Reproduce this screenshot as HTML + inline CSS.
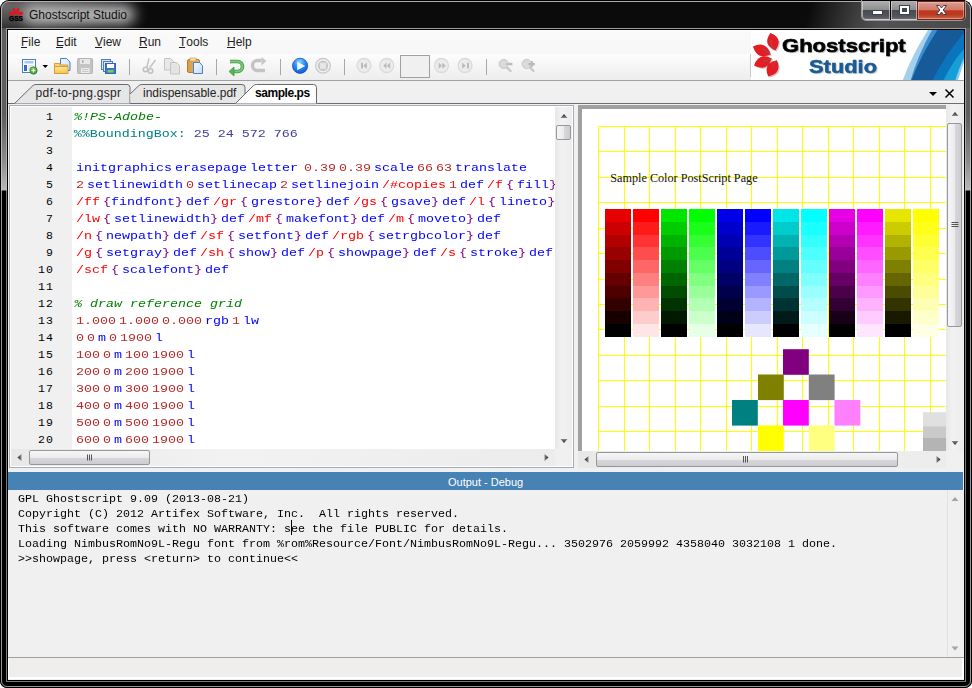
<!DOCTYPE html>
<html><head><meta charset="utf-8">
<style>
*{margin:0;padding:0;box-sizing:border-box}
html,body{width:972px;height:688px;overflow:hidden;background:#fff;font-family:"Liberation Sans",sans-serif}
.a{position:absolute}
svg{position:absolute;overflow:visible}
#win{left:0;top:0;width:972px;height:688px;border-radius:9px 9px 7px 7px;overflow:hidden;
 background:linear-gradient(to bottom,#5e5e5e 0,#5e5e5e 115px,#8a8a8a 160px,#b8b8b8 190px,#000 191px,#000 100%)}
.menu{top:35px;font-size:12px;line-height:14px;color:#1e1e1e}
.menu u{text-decoration:none;position:relative}.menu u:after{content:"";position:absolute;left:0;right:1px;top:12px;height:1px;background:#1e1e1e}
.sep{top:59px;width:1px;height:16px;background:#a8a8a8;border-right:1px solid #fff;width:2px}
.tabt{font-size:12px;line-height:14px;color:#1e1e1e;top:86px}
#code{left:72px;top:107px;width:483px;height:341px;overflow:hidden;font-family:"Liberation Mono",monospace;font-size:11.5px;line-height:17px;background:#fff}
#codei{position:absolute;left:0;top:1px;width:400px;transform:scaleX(1.15942);transform-origin:0 0}
.ln{height:17px;white-space:pre;padding-left:3.45px}
.ln i{display:inline-block;width:2.5875px}
.c{color:#008000;font-style:italic}
.d{color:#008080}
.v{color:#40409a}
.k{color:#0000ff}
.n{color:#b52a2a}
.l{color:#ff0000}
.b{color:#800080}
#gut{left:11px;top:107px;width:61px;height:342px;background:#f0f0f0;font-family:"Liberation Mono",monospace;font-size:11.5px;letter-spacing:1.1px;line-height:17px;color:#000;text-align:right;padding-top:1px}
#gut div{height:17px;padding-right:18px}
#out{left:18px;top:491.5px;font-family:"Liberation Mono",monospace;font-size:10.8px;transform:scaleX(1.08025);transform-origin:0 0;line-height:15px;color:#000;white-space:pre}

.vs{background:linear-gradient(to right,#e8e8e8,#f2f2f2 40%,#ececec)}
.thumbv{border:1px solid #979797;border-radius:2px;background:linear-gradient(to right,#f6f6f6 0,#ececec 50%,#d8d8dc 51%,#ccccd2 100%)}
.thumbh{border:1px solid #979797;border-radius:2px;background:linear-gradient(to bottom,#f6f6f6 0,#ececec 50%,#d8d8dc 51%,#ccccd2 100%)}
</style></head><body>
<div id="win" class="a">
 <!-- title bar dark region -->
 <div class="a" style="left:2px;top:2px;width:968px;height:26px;background:#0b0b0b"></div>
 <div class="a" style="left:0;top:0;width:260px;height:30px;background:radial-gradient(ellipse 130px 34px at 0px 6px,#6a6a6a 0,#4a4a4a 40%,rgba(10,10,10,0) 100%)"></div>
 <div class="a" style="left:740px;top:2px;width:230px;height:26px;background:linear-gradient(105deg,rgba(11,11,11,0) 0,rgba(11,11,11,0) 30%,rgba(75,75,75,.85) 52%,rgba(90,90,90,.9) 62%,rgba(80,80,80,.9) 100%)"></div>
 <div class="a" style="left:23px;top:5px;width:112px;height:19px;border-radius:9px;background:#bdbdbd;filter:blur(6.5px)"></div>
 <!-- outer lines -->
 <div class="a" style="left:0;top:0;width:972px;height:688px;border:1px solid #000;border-radius:9px 9px 7px 7px"></div>
 <div class="a" style="left:1px;top:1px;width:970px;height:686px;border:1px solid rgba(200,200,200,.75);border-radius:8px 8px 6px 6px"></div>
 <div class="a" style="left:6px;top:28px;width:960px;height:654px;border:1px solid rgba(200,200,200,.6)"></div>
 <div class="a" style="left:7px;top:29px;width:958px;height:652px;border:1px solid #000"></div>
</div>
<!-- title icon -->
<svg style="left:0;top:0" width="30" height="30" viewBox="0 0 30 30">
 <g fill="#e8141c">
  <ellipse cx="11.8" cy="13.6" rx="3" ry="1.7" transform="rotate(15 11.8 13.6)"/>
  <ellipse cx="20.2" cy="13.6" rx="3" ry="1.7" transform="rotate(-15 20.2 13.6)"/>
  <ellipse cx="14.3" cy="10.6" rx="1.5" ry="2.7" transform="rotate(-20 14.3 10.6)"/>
  <ellipse cx="17.7" cy="10.6" rx="1.5" ry="2.7" transform="rotate(20 17.7 10.6)"/>
  <path d="M14 11 L16 13.5 L18 11 L17 14 L15 14Z"/>
 </g>
 <text x="16" y="21" font-family="Liberation Sans" font-weight="bold" font-size="6.6" text-anchor="middle" fill="#000" stroke="#000" stroke-width=".35">GSS</text>
</svg>
<div class="a" style="left:29px;top:7.7px;font-size:12px;line-height:14px;color:#101010;white-space:nowrap">Ghostscript Studio</div>
<!-- caption buttons -->
<div class="a" style="left:861px;top:0;width:105px;height:21px;border:1px solid rgba(220,220,220,.7);border-top:none;border-radius:0 0 5px 5px;background:#000"></div>
<div class="a" style="left:862px;top:1px;width:28px;height:19px;border:1px solid rgba(230,230,230,.6);border-radius:0 0 0 4px;background:linear-gradient(#aaaaaa 0,#8e8e8e 45%,#4a4a50 50%,#55555c 85%,#6a6a70 100%)"></div>
<div class="a" style="left:891px;top:1px;width:26px;height:19px;border:1px solid rgba(230,230,230,.6);background:linear-gradient(#aaaaaa 0,#8e8e8e 45%,#4a4a50 50%,#55555c 85%,#6a6a70 100%)"></div>
<div class="a" style="left:917px;top:1px;width:48px;height:19px;border:1px solid rgba(110,20,10,.9);border-radius:0 0 4px 0;background:linear-gradient(#dc9c8e 0,#d07a6a 45%,#c2361a 52%,#b83a20 75%,#cc6a4c 100%);box-shadow:inset 0 0 0 1px rgba(255,210,200,.45)"></div>
<div class="a" style="left:872.5px;top:11px;width:9px;height:2.6px;background:#fff;outline:1px solid #3c4454"></div>
<div class="a" style="left:899.5px;top:6px;width:9.5px;height:8px;border:2px solid #fff;border-bottom-width:2.5px;outline:1px solid #3c4454;background:#404656"></div>
<svg style="left:935px;top:5px" width="13" height="10" viewBox="0 0 13 10">
 <path d="M1.5 0.5 L4.5 0.5 L6.5 3 L8.5 0.5 L11.5 0.5 L8.2 5 L11.5 9.5 L8.5 9.5 L6.5 7 L4.5 9.5 L1.5 9.5 L4.8 5 Z" fill="#fff" stroke="#3a4050" stroke-width="1"/>
</svg>
<!-- client -->
<div class="a" style="left:8px;top:30px;width:956px;height:650px;background:#f0f0f0"></div>
<div class="a" style="left:8px;top:30px;width:956px;height:24px;background:linear-gradient(#fafafa,#f7f7f7)"></div>
<div class="a" style="left:8px;top:30px;width:956px;height:1px;background:#fff"></div>
<div class="a" style="left:8px;top:54px;width:743px;height:26px;background:linear-gradient(#fdfdfd,#ededed)"></div>
<div class="a" style="left:8px;top:80px;width:956px;height:1px;background:#a0a0a0"></div>
<div class="menu a" style="left:21px"><u>F</u>ile</div>
<div class="menu a" style="left:56px"><u>E</u>dit</div>
<div class="menu a" style="left:95px"><u>V</u>iew</div>
<div class="menu a" style="left:139px"><u>R</u>un</div>
<div class="menu a" style="left:179px"><u>T</u>ools</div>
<div class="menu a" style="left:227px"><u>H</u>elp</div>
<svg style="left:0;top:0" width="972" height="90" viewBox="0 0 972 90">
 <defs>
  <linearGradient id="gfold" x1="0" y1="0" x2="0" y2="1"><stop offset="0" stop-color="#fbe7a0"/><stop offset="1" stop-color="#f2c64e"/></linearGradient>
  <linearGradient id="gdoc" x1="0" y1="0" x2="1" y2="1"><stop offset="0" stop-color="#f4f9ff"/><stop offset="1" stop-color="#c4dcf6"/></linearGradient>
  <linearGradient id="gclip" x1="0" y1="0" x2="1" y2="0"><stop offset="0" stop-color="#d89a48"/><stop offset="1" stop-color="#eab868"/></linearGradient>
  <radialGradient id="grun" cx="0.45" cy="0.25" r="0.8"><stop offset="0" stop-color="#8ad8ff"/><stop offset="0.45" stop-color="#2a90f0"/><stop offset="1" stop-color="#1050d8"/></radialGradient>
  <radialGradient id="ggrn" cx="0.4" cy="0.3" r="0.8"><stop offset="0" stop-color="#8cd070"/><stop offset="1" stop-color="#3a8a2a"/></radialGradient>
 </defs>
 <!-- new -->
 <rect x="22.5" y="59.5" width="13" height="13" fill="#fff" stroke="#4a7ecb"/>
 <rect x="24.5" y="61" width="9" height="2.5" fill="#a8c8ee"/>
 <rect x="24" y="65" width="3" height="6" fill="#3a6cb8"/>
 <rect x="28" y="65" width="5" height="6" fill="#e4e8f0"/>
 <circle cx="33.5" cy="70.5" r="3.7" fill="url(#ggrn)" stroke="#2e7a22" stroke-width=".7"/>
 <path d="M33.5 68.6v3.8M31.6 70.5h3.8" stroke="#f4fff0" stroke-width="1.2"/>
 <path d="M42.5 65h5.5l-2.75 3z" fill="#000"/>
 <!-- open -->
 <path d="M60.5 58.5h6l3.5 3.5v8.5h-9.5z" fill="url(#gdoc)" stroke="#4a7ecb"/>
 <path d="M54.5 63.5h5l1 1.5h7v8.5h-13z" fill="#f6d676" stroke="#de9a2e"/>
 <path d="M54.5 66.5h13.5v7h-13.5z" fill="url(#gfold)" stroke="#de9a2e"/>
 <!-- save gray -->
 <rect x="77.5" y="58.5" width="15" height="15" rx="1" fill="#c4c4c4" stroke="#b4b4b4"/>
 <rect x="80" y="59" width="10" height="5" fill="#e8e8e8"/>
 <rect x="82" y="60" width="1.5" height="3" fill="#b0b0b0"/>
 <rect x="81" y="68" width="8.5" height="5" fill="#ececec"/>
 <path d="M82 69.5h6.5M82 71.5h6.5" stroke="#c8c8c8"/>
 <!-- save all -->
 <rect x="101.5" y="59.5" width="9" height="10" fill="#dce8f8" stroke="#4a7ecb"/>
 <rect x="103.5" y="61.5" width="9" height="10" fill="#dce8f8" stroke="#4a7ecb"/>
 <rect x="105.5" y="63.5" width="10" height="10" fill="#3c74c8" stroke="#3466b8"/>
 <rect x="107" y="64" width="7" height="4" fill="#fff"/>
 <rect x="107.5" y="70" width="6" height="2.5" fill="#7ccf4a"/>
 <!-- separators -->
 <path d="M129.5 59v16M216.5 59v16M280.5 59v16M344.5 59v16M486.5 59v16" stroke="#a8a8a8"/>
 <!-- cut -->
 <path d="M149 58.5L147 67M155.5 60L149.5 68" stroke="#c4c4c4" stroke-width="1.5"/>
 <circle cx="145.5" cy="69.5" r="2.2" fill="none" stroke="#c0c0c0" stroke-width="1.6"/>
 <circle cx="150.5" cy="71" r="2.2" fill="none" stroke="#c0c0c0" stroke-width="1.6"/>
 <!-- copy -->
 <path d="M164.5 58.5h6l3 3v8.5h-9z" fill="#e8e8e8" stroke="#c4c4c4"/>
 <path d="M170.5 62.5h6l3 3v8.5h-9z" fill="#e4e4e4" stroke="#c4c4c4"/>
 <!-- paste -->
 <rect x="187.5" y="59.5" width="12" height="13" rx="1.5" fill="url(#gclip)" stroke="#b87a30"/>
 <rect x="190" y="58" width="6" height="3" fill="#f8e8b0" stroke="#c89040" stroke-width=".6"/>
 <path d="M193.5 62.5h6l3 3v8h-9z" fill="url(#gdoc)" stroke="#4a7ecb"/>
 <!-- undo -->
 <path d="M230 61.5h7.5a5 5 0 0 1 0 10h-4" fill="none" stroke="#3f9a3f" stroke-width="3.6"/>
 <path d="M230 61.5h7.5a5 5 0 0 1 0 10h-4" fill="none" stroke="#7cc87c" stroke-width="2"/>
 <path d="M229 71.5l5-4.5v9z" fill="#5cb05c" stroke="#3f9a3f" stroke-width=".8"/>
 <!-- redo -->
 <path d="M265 70.5h-7.5a5 5 0 0 1 0 -10h4" fill="none" stroke="#c4c4c4" stroke-width="3.4"/>
 <path d="M266.5 61l-5-4v8.5z" fill="#c8c8c8"/>
 <!-- run -->
 <circle cx="300.1" cy="65.8" r="7.6" fill="url(#grun)" stroke="#1a4ec0" stroke-width=".8"/>
 <path d="M297.2 61.8l8 4.2-8 4.2z" fill="#eef8ff"/>
 <!-- stop -->
 <circle cx="323" cy="65.8" r="7.4" fill="#f0f0f0" stroke="#c8c8c8" stroke-width="1.2"/>
 <circle cx="323" cy="65.8" r="5.2" fill="#c8c8c8"/>
 <rect x="320" y="62.8" width="6" height="6" fill="#e6e6e6"/>
 <!-- nav -->
 <g fill="#ececec" stroke="#dadada" stroke-width="1.3">
  <circle cx="364" cy="65.5" r="7"/><circle cx="386.7" cy="65.5" r="7"/><circle cx="441.5" cy="65.5" r="7"/><circle cx="465" cy="65.5" r="7"/>
 </g>
 <g fill="#bcbcbc">
  <rect x="361" y="62.8" width="2" height="5.6"/><path d="M366.8 62.5v6.3l-3.6-3.15z"/>
  <path d="M386.5 62.5v6.3l-3.4-3.15zM390.2 62.5v6.3l-3.4-3.15z"/>
  <path d="M438.6 62.5v6.3l3.4-3.15zM442.3 62.5v6.3l3.4-3.15z"/>
  <rect x="467" y="62.8" width="2" height="5.6"/><path d="M462.2 62.5v6.3l3.6-3.15z"/>
 </g>
 <rect x="400.5" y="55.5" width="29" height="22" fill="#f0f0f0" stroke="#a0a0a0"/>
 <!-- zoom -->
 <g stroke="#c8c8c8" fill="#dadada">
  <circle cx="503.7" cy="64" r="4.6" stroke-width="1"/>
  <path d="M507 67.5l3.5 3.5" stroke-width="2.4" stroke-linecap="round"/>
  <circle cx="526.7" cy="64" r="4.6" stroke-width="1"/>
  <path d="M530 67.5l3.5 3.5" stroke-width="2.4" stroke-linecap="round"/>
 </g>
 <rect x="505.5" y="62.8" width="7" height="2.6" fill="#bcbcbc" stroke="#e6e6e6" stroke-width=".6"/>
 <path d="M528.3 64.1h6.5M531.55 60.9v6.4" stroke="#e8e8e8" stroke-width="3.2"/>
 <path d="M528.3 64.1h6.5M531.55 60.9v6.4" stroke="#b8b8b8" stroke-width="2.2"/>
 <!-- toolbar end line -->
 <path d="M750.5 54v23" stroke="#c8c8c8"/>
</svg>
<!-- logo -->
<div class="a" style="left:751px;top:30px;width:213px;height:50px;background:#fff;overflow:hidden">
<svg style="left:-751px;top:-30px" width="972" height="90" viewBox="0 0 972 90">
 <path d="M770.4 33.0 Q784.0 38.5 775.5 50.4 Q761.9 44.9 770.4 33.0Z M752.9 46.4 Q766.3 40.4 770.7 54.4 Q757.3 60.4 752.9 46.4Z M754.0 65.6 Q758.8 51.8 771.8 58.4 Q767.0 72.2 754.0 65.6Z M768.2 76.5 Q762.4 62.9 776.9 60.2 Q782.7 73.8 768.2 76.5Z" fill="#707070" opacity=".35" transform="translate(1.2,1.2)"/>
 <path d="M770.4 33.0 Q784.0 38.5 775.5 50.4 Q761.9 44.9 770.4 33.0Z M752.9 46.4 Q766.3 40.4 770.7 54.4 Q757.3 60.4 752.9 46.4Z M754.0 65.6 Q758.8 51.8 771.8 58.4 Q767.0 72.2 754.0 65.6Z M768.2 76.5 Q762.4 62.9 776.9 60.2 Q782.7 73.8 768.2 76.5Z" fill="#e41c24"/>
 <path d="M770.8 40 Q771.5 45 772.8 49.5 M762 48.6 Q766 50.5 770 53.8 M763 62.2 Q767 60.2 771 58.8 M772.6 67.5 Q773.5 64 775.8 61" stroke="#6e6e6e" stroke-width=".9" fill="none" opacity=".75"/>
 <path d="M928 30 L964 30 L964 80 L902.8 80 Q912 55 928 30Z" fill="#a6cfec"/>
 <path d="M932 30 L964 30 L964 80 L910.7 80 Q918 55 932 30Z" fill="#3a8fd0"/>
 <path d="M937.4 30 L964 30 L964 80 L911.5 80 Q921 55 937.4 30Z" fill="#165a9a"/>
 <path d="M964 32.7 L964 80 L932.7 80 Q945 55 964 32.7Z" fill="#0a74bd"/>
 <path d="M964 49 L964 80 L943.7 80 Q952 62 964 49Z" fill="#169ed6"/>
 <path d="M964 57.8 L964 80 L955.4 80 Q959 68 964 57.8Z" fill="#8ccdee"/>
 <path d="M964 62 L964 80 L958 80 Q961 71 964 62Z" fill="#fff"/>
</svg>
<div class="a" style="left:31px;top:5.8px;font-weight:bold;font-size:19px;line-height:20px;color:#000;white-space:nowrap;transform:scaleX(1.16);transform-origin:0 0;-webkit-text-stroke:.6px #000;text-shadow:1px 1px 1px rgba(0,0,0,.3)">Ghostscript</div>
<div class="a" style="left:58px;top:28px;font-weight:bold;font-size:17.5px;line-height:18px;color:#1a5a96;white-space:nowrap;transform:scaleX(1.25);transform-origin:0 0;-webkit-text-stroke:.5px #1a5a96;text-shadow:1px 1px 1px rgba(0,0,0,.25)">Studio</div>
</div>
<!-- tab bar -->
<div class="a" style="left:8px;top:103px;width:956px;height:1px;background:#6e6e6e"></div>
<svg style="left:0;top:0" width="972" height="110" viewBox="0 0 972 110">
 <path d="M14.5 103.5 L33 85.5 Q34 84.5 36 84.5 L127 84.5 Q130 84.5 130 87.5 L130 103.5" fill="#e6e6e6" stroke="#6a6a6a"/>
 <path d="M130 94 L139 85.5 Q140 84.5 142 84.5 L242 84.5 Q245 84.5 245 87.5 L245 103.5 L130.5 103.5" fill="#e6e6e6" stroke="#6a6a6a"/>
 <path d="M235.5 103.5 L253.5 85.5 Q254.5 84.5 256.5 84.5 L313.5 84.5 Q316.5 84.5 316.5 87.5 L316.5 103.5" fill="#fff" stroke="#6a6a6a"/>
 <path d="M236 104.5 L316 104.5" stroke="#ddd"/>
 <path d="M929 92h8l-4 4z" fill="#000"/>
 <path d="M945.5 89.5l8 8M953.5 89.5l-8 8" stroke="#000" stroke-width="1.5"/>
</svg>
<div class="tabt a" style="left:35.5px;letter-spacing:.3px">pdf-to-png.gspr</div>
<div class="tabt a" style="left:143px">indispensable.pdf</div>
<div class="tabt a" style="left:255px;font-weight:bold;color:#000;letter-spacing:-.45px">sample.ps</div>
<!-- editor pane -->
<div class="a" style="left:9px;top:105px;width:565px;height:363px;border:1px solid #a7abb7;background:#fff"></div>
<div id="gut" class="a">
<div>1</div><div>2</div><div>3</div><div>4</div><div>5</div><div>6</div><div>7</div><div>8</div><div>9</div><div>10</div><div>11</div><div>12</div><div>13</div><div>14</div><div>15</div><div>16</div><div>17</div><div>18</div><div>19</div><div>20</div>
</div>
<div id="code" class="a"><div id="codei">
<div class="ln" style="margin-left:-1.7px"><span class="c">%!PS-Adobe-</span></div>
<div class="ln" style="margin-left:-2px"><span class="d">%%BoundingBox:</span><span class="v"> 25 24 572 766</span></div>
<div class="ln"></div>
<div class="ln"><span class="k">initgraphics</span><i></i><span class="k">erasepage</span><i></i><span class="k">letter</span><i></i><i></i><span class="n">0.39</span><i></i><span class="n">0.39</span><i></i><span class="k">scale</span><i></i><span class="n">66</span><i></i><span class="n">63</span><i></i><span class="k">translate</span></div>
<div class="ln"><span class="n">2</span><i></i><span class="k">setlinewidth</span><i></i><span class="n">0</span><i></i><span class="k">setlinecap</span><i></i><span class="n">2</span><i></i><span class="k">setlinejoin</span><i></i><span class="l">/#copies</span><i></i><span class="n">1</span><i></i><span class="k">def</span><i></i><span class="l">/f</span><i></i><span class="b">{</span><i></i><span class="k">fill</span><span class="b">}</span></div>
<div class="ln"><span class="l">/ff</span><i></i><span class="b">{</span><span class="k">findfont</span><span class="b">}</span><i></i><span class="k">def</span><i></i><span class="l">/gr</span><i></i><span class="b">{</span><i></i><span class="k">grestore</span><span class="b">}</span><i></i><span class="k">def</span><i></i><span class="l">/gs</span><i></i><span class="b">{</span><i></i><span class="k">gsave</span><span class="b">}</span><i></i><span class="k">def</span><i></i><span class="l">/l</span><i></i><span class="b">{</span><i></i><span class="k">lineto</span><span class="b">}</span></div>
<div class="ln"><span class="l">/lw</span><i></i><span class="b">{</span><i></i><span class="k">setlinewidth</span><span class="b">}</span><i></i><span class="k">def</span><i></i><span class="l">/mf</span><i></i><span class="b">{</span><i></i><span class="k">makefont</span><span class="b">}</span><i></i><span class="k">def</span><i></i><span class="l">/m</span><i></i><span class="b">{</span><i></i><span class="k">moveto</span><span class="b">}</span><i></i><span class="k">def</span></div>
<div class="ln"><span class="l">/n</span><i></i><span class="b">{</span><i></i><span class="k">newpath</span><span class="b">}</span><i></i><span class="k">def</span><i></i><span class="l">/sf</span><i></i><span class="b">{</span><i></i><span class="k">setfont</span><span class="b">}</span><i></i><span class="k">def</span><i></i><span class="l">/rgb</span><i></i><span class="b">{</span><i></i><span class="k">setrgbcolor</span><span class="b">}</span><i></i><span class="k">def</span></div>
<div class="ln"><span class="l">/g</span><i></i><span class="b">{</span><i></i><span class="k">setgray</span><span class="b">}</span><i></i><span class="k">def</span><i></i><span class="l">/sh</span><i></i><span class="b">{</span><i></i><span class="k">show</span><span class="b">}</span><i></i><span class="k">def</span><i></i><span class="l">/p</span><i></i><span class="b">{</span><i></i><span class="k">showpage</span><span class="b">}</span><i></i><span class="k">def</span><i></i><span class="l">/s</span><i></i><span class="b">{</span><i></i><span class="k">stroke</span><span class="b">}</span><i></i><span class="k">def</span></div>
<div class="ln"><span class="l">/scf</span><i></i><span class="b">{</span><i></i><span class="k">scalefont</span><span class="b">}</span><i></i><span class="k">def</span></div>
<div class="ln"></div>
<div class="ln" style="margin-left:-1.7px"><span class="c">% draw reference grid</span></div>
<div class="ln"><span class="n">1.000</span><i></i><span class="n">1.000</span><i></i><span class="n">0.000</span><i></i><span class="k">rgb</span><i></i><span class="n">1</span><i></i><span class="k">lw</span></div>
<div class="ln"><span class="n">0</span><i></i><span class="n">0</span><i></i><span class="k">m</span><i></i><span class="n">0</span><i></i><span class="n">1900</span><i></i><span class="k">l</span></div>
<div class="ln"><span class="n">100</span><i></i><span class="n">0</span><i></i><span class="k">m</span><i></i><span class="n">100</span><i></i><span class="n">1900</span><i></i><span class="k">l</span></div>
<div class="ln"><span class="n">200</span><i></i><span class="n">0</span><i></i><span class="k">m</span><i></i><span class="n">200</span><i></i><span class="n">1900</span><i></i><span class="k">l</span></div>
<div class="ln"><span class="n">300</span><i></i><span class="n">0</span><i></i><span class="k">m</span><i></i><span class="n">300</span><i></i><span class="n">1900</span><i></i><span class="k">l</span></div>
<div class="ln"><span class="n">400</span><i></i><span class="n">0</span><i></i><span class="k">m</span><i></i><span class="n">400</span><i></i><span class="n">1900</span><i></i><span class="k">l</span></div>
<div class="ln"><span class="n">500</span><i></i><span class="n">0</span><i></i><span class="k">m</span><i></i><span class="n">500</span><i></i><span class="n">1900</span><i></i><span class="k">l</span></div>
<div class="ln"><span class="n">600</span><i></i><span class="n">0</span><i></i><span class="k">m</span><i></i><span class="n">600</span><i></i><span class="n">1900</span><i></i><span class="k">l</span></div>
</div></div>
<!-- editor vscroll -->
<div class="a vs" style="left:555px;top:107px;width:17px;height:342px"></div>
<div class="a thumbv" style="left:556px;top:125px;width:15px;height:15px"></div>
<div class="a vs" style="left:11px;top:449px;width:544px;height:17px"></div>
<div class="a thumbh" style="left:29px;top:450px;width:121px;height:15px"></div>
<div class="a" style="left:555px;top:449px;width:17px;height:17px;background:#f0f0f0"></div>
<div class="a" style="left:578px;top:105px;width:368px;height:346px;background:#a0a0a0;overflow:hidden">
<div class="a" style="left:4px;top:4px;width:400px;height:400px;background:#fff"></div>
<svg style="left:-578px;top:-105px" width="972" height="460" viewBox="0 0 972 460">
<path d="M598 126h1V460h-1zM624 126h1V460h-1zM649 126h1V460h-1zM675 126h1V460h-1zM700 126h1V460h-1zM726 126h1V460h-1zM751 126h1V460h-1zM777 126h1V460h-1zM802 126h1V460h-1zM828 126h1V460h-1zM853 126h1V460h-1zM879 126h1V460h-1zM904 126h1V460h-1zM930 126h1V460h-1zM598 126H960v1H598zM598 151H960v1H598zM598 177H960v1H598zM598 202H960v1H598zM598 228H960v1H598zM598 253H960v1H598zM598 279H960v1H598zM598 304H960v1H598zM598 329H960v1H598zM598 355H960v1H598zM598 380H960v1H598zM598 406H960v1H598zM598 431H960v1H598zM598 457H960v1H598z" fill="#ffff00" shape-rendering="crispEdges"/>
<g shape-rendering="crispEdges">
<rect x="605" y="209" width="26" height="13" fill="#e60000"/>
<rect x="605" y="222" width="26" height="13" fill="#cc0000"/>
<rect x="605" y="235" width="26" height="12" fill="#b20000"/>
<rect x="605" y="247" width="26" height="13" fill="#990000"/>
<rect x="605" y="260" width="26" height="13" fill="#800000"/>
<rect x="605" y="273" width="26" height="13" fill="#660000"/>
<rect x="605" y="286" width="26" height="12" fill="#4c0000"/>
<rect x="605" y="298" width="26" height="13" fill="#330000"/>
<rect x="605" y="311" width="26" height="13" fill="#190000"/>
<rect x="605" y="324" width="26" height="13" fill="#000000"/>
<rect x="633" y="209" width="26" height="13" fill="#ff0000"/>
<rect x="633" y="222" width="26" height="13" fill="#ff1a1a"/>
<rect x="633" y="235" width="26" height="12" fill="#ff3333"/>
<rect x="633" y="247" width="26" height="13" fill="#ff4d4d"/>
<rect x="633" y="260" width="26" height="13" fill="#ff6666"/>
<rect x="633" y="273" width="26" height="13" fill="#ff8080"/>
<rect x="633" y="286" width="26" height="12" fill="#ff9999"/>
<rect x="633" y="298" width="26" height="13" fill="#ffb3b3"/>
<rect x="633" y="311" width="26" height="13" fill="#ffcccc"/>
<rect x="633" y="324" width="26" height="13" fill="#ffe6e6"/>
<rect x="661" y="209" width="26" height="13" fill="#00e600"/>
<rect x="661" y="222" width="26" height="13" fill="#00cc00"/>
<rect x="661" y="235" width="26" height="12" fill="#00b200"/>
<rect x="661" y="247" width="26" height="13" fill="#009900"/>
<rect x="661" y="260" width="26" height="13" fill="#008000"/>
<rect x="661" y="273" width="26" height="13" fill="#006600"/>
<rect x="661" y="286" width="26" height="12" fill="#004c00"/>
<rect x="661" y="298" width="26" height="13" fill="#003300"/>
<rect x="661" y="311" width="26" height="13" fill="#001900"/>
<rect x="661" y="324" width="26" height="13" fill="#000000"/>
<rect x="689" y="209" width="26" height="13" fill="#00ff00"/>
<rect x="689" y="222" width="26" height="13" fill="#1aff1a"/>
<rect x="689" y="235" width="26" height="12" fill="#33ff33"/>
<rect x="689" y="247" width="26" height="13" fill="#4dff4d"/>
<rect x="689" y="260" width="26" height="13" fill="#66ff66"/>
<rect x="689" y="273" width="26" height="13" fill="#80ff80"/>
<rect x="689" y="286" width="26" height="12" fill="#99ff99"/>
<rect x="689" y="298" width="26" height="13" fill="#b3ffb3"/>
<rect x="689" y="311" width="26" height="13" fill="#ccffcc"/>
<rect x="689" y="324" width="26" height="13" fill="#e6ffe6"/>
<rect x="717" y="209" width="26" height="13" fill="#0000e6"/>
<rect x="717" y="222" width="26" height="13" fill="#0000cc"/>
<rect x="717" y="235" width="26" height="12" fill="#0000b2"/>
<rect x="717" y="247" width="26" height="13" fill="#000099"/>
<rect x="717" y="260" width="26" height="13" fill="#000080"/>
<rect x="717" y="273" width="26" height="13" fill="#000066"/>
<rect x="717" y="286" width="26" height="12" fill="#00004c"/>
<rect x="717" y="298" width="26" height="13" fill="#000033"/>
<rect x="717" y="311" width="26" height="13" fill="#000019"/>
<rect x="717" y="324" width="26" height="13" fill="#000000"/>
<rect x="745" y="209" width="26" height="13" fill="#0000ff"/>
<rect x="745" y="222" width="26" height="13" fill="#1a1aff"/>
<rect x="745" y="235" width="26" height="12" fill="#3333ff"/>
<rect x="745" y="247" width="26" height="13" fill="#4d4dff"/>
<rect x="745" y="260" width="26" height="13" fill="#6666ff"/>
<rect x="745" y="273" width="26" height="13" fill="#8080ff"/>
<rect x="745" y="286" width="26" height="12" fill="#9999ff"/>
<rect x="745" y="298" width="26" height="13" fill="#b3b3ff"/>
<rect x="745" y="311" width="26" height="13" fill="#ccccff"/>
<rect x="745" y="324" width="26" height="13" fill="#e6e6ff"/>
<rect x="773" y="209" width="26" height="13" fill="#00e6e6"/>
<rect x="773" y="222" width="26" height="13" fill="#00cccc"/>
<rect x="773" y="235" width="26" height="12" fill="#00b2b2"/>
<rect x="773" y="247" width="26" height="13" fill="#009999"/>
<rect x="773" y="260" width="26" height="13" fill="#008080"/>
<rect x="773" y="273" width="26" height="13" fill="#006666"/>
<rect x="773" y="286" width="26" height="12" fill="#004c4c"/>
<rect x="773" y="298" width="26" height="13" fill="#003333"/>
<rect x="773" y="311" width="26" height="13" fill="#001919"/>
<rect x="773" y="324" width="26" height="13" fill="#000000"/>
<rect x="801" y="209" width="26" height="13" fill="#00ffff"/>
<rect x="801" y="222" width="26" height="13" fill="#1affff"/>
<rect x="801" y="235" width="26" height="12" fill="#33ffff"/>
<rect x="801" y="247" width="26" height="13" fill="#4dffff"/>
<rect x="801" y="260" width="26" height="13" fill="#66ffff"/>
<rect x="801" y="273" width="26" height="13" fill="#80ffff"/>
<rect x="801" y="286" width="26" height="12" fill="#99ffff"/>
<rect x="801" y="298" width="26" height="13" fill="#b3ffff"/>
<rect x="801" y="311" width="26" height="13" fill="#ccffff"/>
<rect x="801" y="324" width="26" height="13" fill="#e6ffff"/>
<rect x="829" y="209" width="26" height="13" fill="#e600e6"/>
<rect x="829" y="222" width="26" height="13" fill="#cc00cc"/>
<rect x="829" y="235" width="26" height="12" fill="#b200b2"/>
<rect x="829" y="247" width="26" height="13" fill="#990099"/>
<rect x="829" y="260" width="26" height="13" fill="#800080"/>
<rect x="829" y="273" width="26" height="13" fill="#660066"/>
<rect x="829" y="286" width="26" height="12" fill="#4c004c"/>
<rect x="829" y="298" width="26" height="13" fill="#330033"/>
<rect x="829" y="311" width="26" height="13" fill="#190019"/>
<rect x="829" y="324" width="26" height="13" fill="#000000"/>
<rect x="857" y="209" width="26" height="13" fill="#ff00ff"/>
<rect x="857" y="222" width="26" height="13" fill="#ff1aff"/>
<rect x="857" y="235" width="26" height="12" fill="#ff33ff"/>
<rect x="857" y="247" width="26" height="13" fill="#ff4dff"/>
<rect x="857" y="260" width="26" height="13" fill="#ff66ff"/>
<rect x="857" y="273" width="26" height="13" fill="#ff80ff"/>
<rect x="857" y="286" width="26" height="12" fill="#ff99ff"/>
<rect x="857" y="298" width="26" height="13" fill="#ffb3ff"/>
<rect x="857" y="311" width="26" height="13" fill="#ffccff"/>
<rect x="857" y="324" width="26" height="13" fill="#ffe6ff"/>
<rect x="885" y="209" width="26" height="13" fill="#e6e600"/>
<rect x="885" y="222" width="26" height="13" fill="#cccc00"/>
<rect x="885" y="235" width="26" height="12" fill="#b2b200"/>
<rect x="885" y="247" width="26" height="13" fill="#999900"/>
<rect x="885" y="260" width="26" height="13" fill="#808000"/>
<rect x="885" y="273" width="26" height="13" fill="#666600"/>
<rect x="885" y="286" width="26" height="12" fill="#4c4c00"/>
<rect x="885" y="298" width="26" height="13" fill="#333300"/>
<rect x="885" y="311" width="26" height="13" fill="#191900"/>
<rect x="885" y="324" width="26" height="13" fill="#000000"/>
<rect x="913" y="209" width="26" height="13" fill="#ffff00"/>
<rect x="913" y="222" width="26" height="13" fill="#ffff1a"/>
<rect x="913" y="235" width="26" height="12" fill="#ffff33"/>
<rect x="913" y="247" width="26" height="13" fill="#ffff4d"/>
<rect x="913" y="260" width="26" height="13" fill="#ffff66"/>
<rect x="913" y="273" width="26" height="13" fill="#ffff80"/>
<rect x="913" y="286" width="26" height="12" fill="#ffff99"/>
<rect x="913" y="298" width="26" height="13" fill="#ffffb3"/>
<rect x="913" y="311" width="26" height="13" fill="#ffffcc"/>
<rect x="913" y="324" width="26" height="13" fill="#ffffe6"/>
</g>
<rect x="783.0" y="349.2" width="25.8" height="25.6" fill="#800080"/>
<rect x="758.0" y="374.5" width="25.8" height="25.6" fill="#808000"/>
<rect x="808.8" y="374.5" width="25.8" height="25.6" fill="#808080"/>
<rect x="732.0" y="400.0" width="25.8" height="25.6" fill="#008080"/>
<rect x="783.0" y="400.0" width="25.8" height="25.6" fill="#ff00ff"/>
<rect x="834.5" y="400.0" width="25.8" height="25.6" fill="#ff80ff"/>
<rect x="758.0" y="425.4" width="25.8" height="25.6" fill="#ffff00"/>
<rect x="808.8" y="425.4" width="25.8" height="25.6" fill="#ffff80"/>
<rect x="923" y="412.2" width="30" height="14" fill="#e0e0e0"/><rect x="923" y="426.2" width="30" height="12" fill="#cacaca"/><rect x="923" y="438" width="30" height="14" fill="#b4b4b4"/>
<text x="610.3" y="182.4" font-family="Liberation Serif" font-size="12.2" fill="#111">Sample Color PostScript Page</text>
</svg></div>
<div class="a vs" style="left:946px;top:105px;width:17px;height:346px"></div>
<div class="a thumbv" style="left:947px;top:123px;width:15px;height:204px"></div>
<div class="a vs" style="left:578px;top:451px;width:368px;height:17px"></div>
<div class="a thumbh" style="left:596px;top:452px;width:302px;height:15px"></div>
<div class="a" style="left:946px;top:451px;width:17px;height:17px;background:#f0f0f0"></div>
<svg style="left:0;top:0" width="972" height="688" viewBox="0 0 972 688">
 <defs>
  <linearGradient id="arr" x1="0" y1="0" x2="0" y2="1"><stop offset="0" stop-color="#222"/><stop offset="1" stop-color="#8a8a8a"/></linearGradient>
  <linearGradient id="arrh" x1="0" y1="0" x2="1" y2="0"><stop offset="0" stop-color="#222"/><stop offset="1" stop-color="#8a8a8a"/></linearGradient>
  <linearGradient id="arrhr" x1="1" y1="0" x2="0" y2="0"><stop offset="0" stop-color="#222"/><stop offset="1" stop-color="#8a8a8a"/></linearGradient>
  <linearGradient id="arrd" x1="0" y1="1" x2="0" y2="0"><stop offset="0" stop-color="#222"/><stop offset="1" stop-color="#8a8a8a"/></linearGradient>
 </defs>
 <!-- editor arrows -->
 <path d="M560.5 118l3.5-4 3.5 4z" fill="url(#arr)"/>
 <path d="M560.5 439l3.5 4 3.5-4z" fill="url(#arrd)"/>
 <path d="M21.5 454l-4 3.5 4 3.5z" fill="url(#arrh)"/>
 <path d="M544.5 454l4 3.5-4 3.5z" fill="url(#arrhr)"/>
 <path d="M87.5 454.5v6M89.5 454.5v6M91.5 454.5v6" stroke="#555" stroke-width="1"/>
 <!-- preview arrows -->
 <path d="M951.5 116l3.5-4 3.5 4z" fill="url(#arr)"/>
 <path d="M951.5 441l3.5 4 3.5-4z" fill="url(#arrd)"/>
 <path d="M588.5 456l-4 3.5 4 3.5z" fill="url(#arrh)"/>
 <path d="M936.5 456l4 3.5-4 3.5z" fill="url(#arrhr)"/>
 <path d="M743.5 456v6.5M745.5 456v6.5M747.5 456v6.5" stroke="#555"/>
 <path d="M951.5 222.5h7M951.5 224.5h7M951.5 226.5h7" stroke="#555"/>
</svg>
<!-- output -->
<div class="a" style="left:8px;top:472px;width:955px;height:18px;background:#4682b4"></div>
<div class="a" style="left:448px;top:474.5px;font-size:11px;line-height:14px;color:#fff;white-space:nowrap">Output - Debug</div>
<div class="a" style="left:947px;top:490px;width:16px;height:167px;background:#f0f0f0;border-left:1px solid #e2e2e2"></div>
<svg style="left:0;top:0" width="972" height="688" viewBox="0 0 972 688"><path d="M951.5 501l3.5-4 3.5 4z" fill="#a4a4a4"/><path d="M951.5 646.5l3.5 4 3.5-4z" fill="#a4a4a4"/></svg>
<div id="out" class="a">GPL Ghostscript 9.09 (2013-08-21)
Copyright (C) 2012 Artifex Software, Inc.  All rights reserved.
This software comes with NO WARRANTY: see the file PUBLIC for details.
Loading NimbusRomNo9L-Regu font from %rom%Resource/Font/NimbusRomNo9L-Regu... 3502976 2059992 4358040 3032108 1 done.
&gt;&gt;showpage, press &lt;return&gt; to continue&lt;&lt;</div>
<div class="a" style="left:291px;top:520px;width:1px;height:15px;background:#000"></div>
<!-- status bar -->
<div class="a" style="left:8px;top:657px;width:956px;height:1px;background:#a0a0a0"></div>
<div class="a" style="left:8px;top:658px;width:956px;height:21px;background:#f0eded;border-left:1px solid #fff;border-bottom:2px solid #fff;border-right:2px solid #fff"></div>
</body></html>
